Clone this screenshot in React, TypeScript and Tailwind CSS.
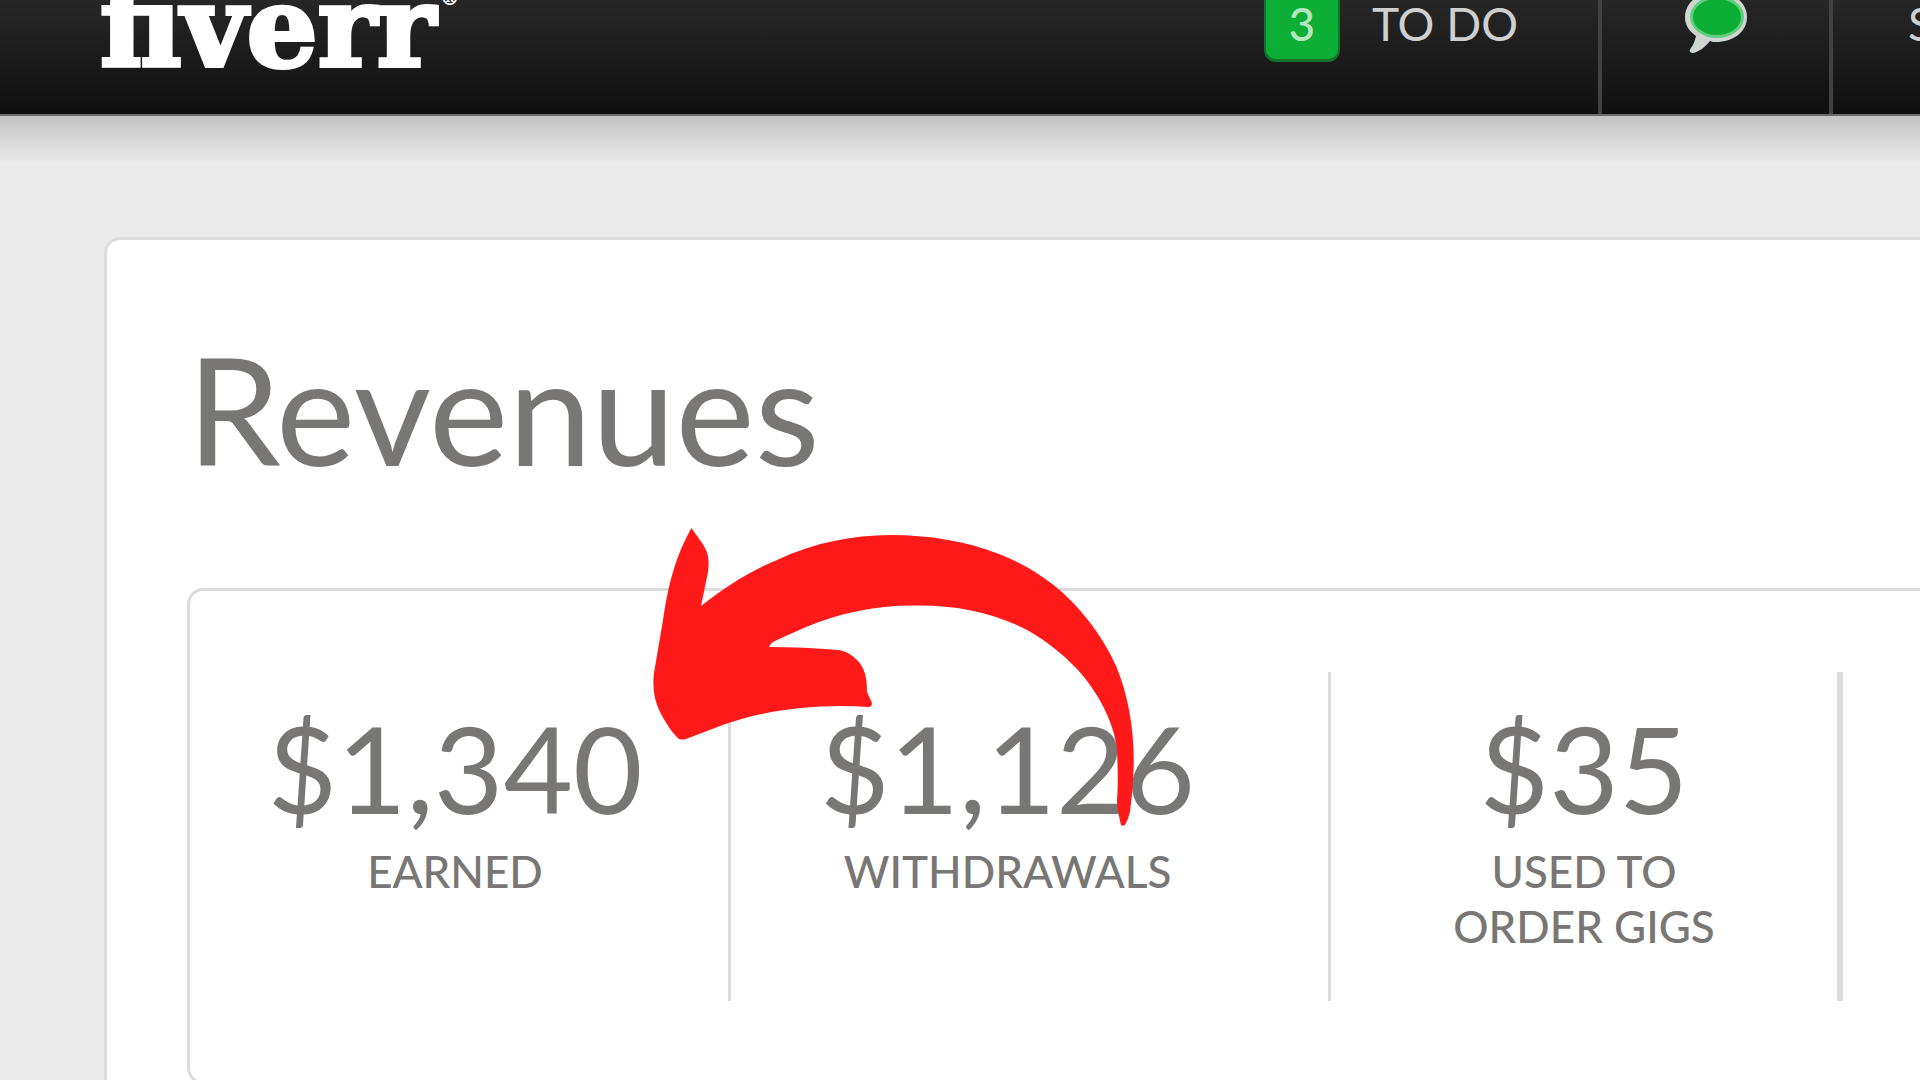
const STATS = [
  { amount: '$1,340', label: ['EARNED'], className: 'border-r-3 pr-2' },
  { amount: '$1,126', label: ['WITHDRAWALS'], className: 'border-r-3 pr-11' },
  { amount: '$35', label: ['USED TO', 'ORDER GIGS'], className: '' },
];

function Header() {
  return (
    <header className="flex h-[116px] items-start justify-between overflow-hidden border-b-2 border-[#6b6b6b] bg-linear-to-b from-[#272727] to-[#101010] pl-[100px]">
      <a
        className="flex items-start gap-1 font-['DejaVu_Serif',serif] font-bold text-white"
        href="#home"
      >
        <span className="text-[112px] leading-[54px] [-webkit-text-stroke:4px_white]">fiverr</span>
        <span className="-mt-3 text-xl leading-5">®</span>
      </a>
      <nav className="flex h-full items-start font-[Lato,sans-serif] text-[46px] leading-12 text-[#cfcfcf]">
        <a className="flex h-full items-start gap-8 pr-20" href="#todo">
          <span className="h-[62px] w-[76px] rounded-b-xl border-x-2 border-b-3 border-[#11702a] bg-[#0cae35] text-center font-medium text-[#b4e6c0]">
            3
          </span>
          TO DO
        </a>
        <a
          className="flex h-full w-[231px] justify-center border-l-4 border-[#424242]"
          href="#messages"
          aria-label="Messages"
        >
          <SpeechBubble />
        </a>
        <a className="h-full w-[91px] overflow-hidden border-l-4 border-[#424242] pl-[75px]" href="#more">
          S
        </a>
      </nav>
    </header>
  );
}

function SpeechBubble() {
  return (
    <svg className="h-14 w-[70px]" viewBox="0 0 70 56" fill="none" aria-hidden="true">
      <path
        d="M35 -8C53 -8 66 3 66 17C66 32 52 42 35 42C33 42 31 42 29 41C24 47 18 52 12 53C8 53 8 50 10 48C13 44 14 40 15 36C8 31 4 25 4 17C4 3 17 -8 35 -8Z"
        fill="#cfd6d0"
      />
      <ellipse cx="36" cy="17" rx="27" ry="21" fill="#5fce7c" />
      <ellipse cx="36" cy="17" rx="24" ry="18" fill="#0cae35" />
    </svg>
  );
}

function CurvedArrow() {
  return (
    <svg
      className="pointer-events-none absolute -top-[91px] left-[430px] h-[360px] w-[560px]"
      viewBox="0 0 560 360"
      fill="#ff1919"
      aria-hidden="true"
    >
      <path d="M71.5 28C78 38 83 43 86 50C89 57 89 63 88 72L81 106C106 86 132 70 157 60C193 43 232 35 271 35C308 35 346 41 379 54C404 64 425 77 443 93C464 112 485 140 496.500 167C509 197 515 235 513.500 270C513 290 511 302 510 312Q508 320 505 325Q503 326 501 325C499 315 497 309 497 300C498 286 498 274 497 250C495 229 484 202 464 177C450 160 429 142 407 130C373 112 334 105 296 105.500C257 105 219 113 186 127C175 132 163 137 153 142Q150 144 149 147C173 147 195 148 218 150C226 151 232 155 237 160C245 168 247 178 247 192L252 203Q252 206 249 207C205 204 163 208 125 218C116 221 107 223 100 226L66 239Q62 240 59 239C53 234 45 222 40 212C33 198 32 183 35 167L43 120C46 100 49 85 53 72C58 55 64 41 71.500 28Z" />
    </svg>
  );
}

function Revenues() {
  return (
    <section className="rounded-tl-2xl border-t-3 border-l-3 border-[#dcdcdc] bg-white pt-[88px] pb-10 pl-20 font-[Lato,sans-serif] text-[#797775]">
      <h1 className="text-[150px] leading-[160px]">Revenues</h1>
      <div className="relative mt-[100px] rounded-l-2xl border-y-3 border-l-3 border-[#dcdcdc] pt-[81px] pb-20">
        <dl className="grid grid-cols-[541fr_600fr_506fr_83fr] text-center">
          {STATS.map(({ amount, label, className }) => (
            <div
              className={`flex h-[329px] flex-col-reverse justify-end border-[#dcdcdc] pt-9 ${className}`}
              key={amount}
            >
              <dt className="mt-4 text-[44px] leading-[55px] font-medium">
                {label.map((line) => (
                  <span className="block" key={line}>
                    {line}
                  </span>
                ))}
              </dt>
              <dd className="text-[120px] leading-[120px]">{amount}</dd>
            </div>
          ))}
          <div className="border-l-6 border-[#dcdcdc]" />
        </dl>
        <CurvedArrow />
      </div>
    </section>
  );
}

export default function App() {
  return (
    <div className="h-screen overflow-hidden bg-[#ebebeb]">
      <Header />
      <div className="h-12 bg-linear-to-b from-[#c3c3c3] to-[#ebebeb]" />
      <main className="pt-[73px] pl-[104px]">
        <Revenues />
      </main>
    </div>
  );
}
